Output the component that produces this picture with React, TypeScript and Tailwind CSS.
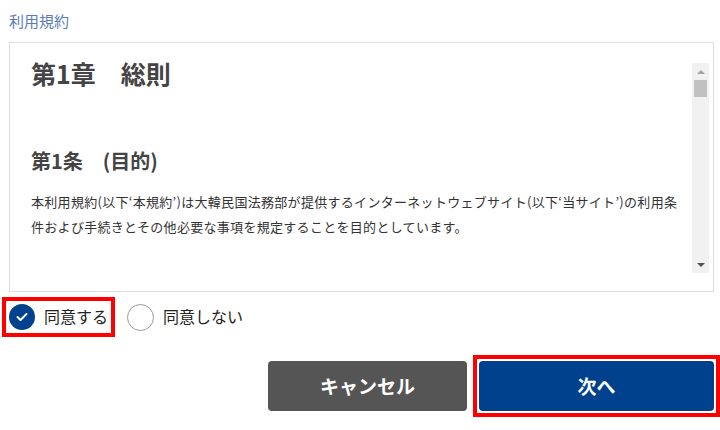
import { useState } from 'react'

const font = { fontFamily: '"Noto Sans CJK JP", "Noto Sans", sans-serif' }

function Scrollbar() {
    return (
        <div className="w-[17px] bg-[#f1f1f1] flex flex-col items-center">
            <div className="h-[17px] flex items-center justify-center">
                <div className="w-0 h-0 border-x-[4px] border-x-transparent border-b-[4px] border-b-[#a3a3a3]" />
            </div>
            <div className="w-[13px] h-[17px] bg-[#c1c1c1]" />
            <div className="flex-1" />
            <div className="h-[17px] flex items-center justify-center">
                <div className="w-0 h-0 border-x-[4px] border-x-transparent border-t-[4px] border-t-[#505050]" />
            </div>
        </div>
    )
}

function Radio({ checked, label, onClick }: { checked: boolean; label: string; onClick: () => void }) {
    return (
        <button onClick={onClick} className="flex items-center gap-[9px] text-[16px] text-[#222] leading-none">
            {checked ? (
                <span className="w-[26px] h-[26px] rounded-full bg-[#00418e] flex items-center justify-center">
                    <svg width="12" height="10" viewBox="0 0 12 10" fill="none">
                        <polyline points="1.5,5 4.5,8 10.5,2" stroke="white" strokeWidth="2" strokeLinecap="round" strokeLinejoin="round" />
                    </svg>
                </span>
            ) : (
                <span className="w-[27px] h-[27px] rounded-full border border-[#999] bg-white" />
            )}
            <span className="-mt-[2px]">{label}</span>
        </button>
    )
}

export default function App() {
    const [agree, set_agree] = useState(true)

    return (
        <div className="w-[720px] h-[430px] bg-white pl-[9px] pt-[10px]" style={font}>
            <p className="text-[15px] leading-[22px] text-[#5b7bb5] mb-[10px]">利用規約</p>

            <div className="mr-[6px] h-[250px] border border-[#dddddd] pt-[20px] pb-[18px] pl-[21px] pr-[4px] flex">
                <div className="flex-1">
                    <h2 className="-mt-[5px] text-[25px] font-bold leading-[30px] text-[#444]">第1章　総則</h2>
                    <h3 className="mt-[62px] text-[20px] font-bold leading-[22px] text-[#444]">第1条　(目的)</h3>
                    <p className="mt-[17px] text-[13px] leading-[25px] text-[#333] tracking-[0.3px] pr-[2px]">
                        本利用規約(以下‘本規約’)は大韓民国法務部が提供するインターネットウェブサイト(以下‘当サイト’)の利用条件および手続きとその他必要な事項を規定することを目的としています。
                    </p>
                </div>
                <Scrollbar />
            </div>

            <div className="mt-[5px] ml-[-7px] flex items-center gap-[12px]">
                <div className={agree ? 'border-[4px] border-[#ff0000] pl-[3px] pr-[3px] py-[3px]' : 'border-[4px] border-transparent pl-[3px] pr-[3px] py-[3px]'}>
                    <Radio checked={agree} label="同意する" onClick={() => set_agree(true)} />
                </div>
                <Radio checked={!agree} label="同意しない" onClick={() => set_agree(false)} />
            </div>

            <div className="mt-[18px] flex justify-end items-center gap-[6px]">
                <button className="w-[199px] h-[50px] rounded-[4px] bg-[#555555] text-white text-[19px] font-bold">
                    キャンセル
                </button>
                <div className="border-[4px] border-[#ff0000] p-[2px]">
                    <button className="w-[235px] h-[50px] rounded-[4px] bg-[#00418e] text-white text-[19px] font-bold">
                        次へ
                    </button>
                </div>
            </div>
        </div>
    )
}
